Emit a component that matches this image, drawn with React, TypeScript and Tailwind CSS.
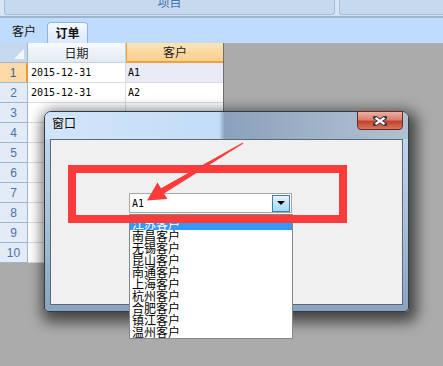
import React from "react";

const rows = [
  { n: "1", date: "2015-12-31", cust: "A1" },
  { n: "2", date: "2015-12-31", cust: "A2" },
  { n: "3" },
  { n: "4" },
  { n: "5" },
  { n: "6" },
  { n: "7" },
  { n: "8" },
  { n: "9" },
  { n: "10" },
];

const listItems = [
  "江苏客户",
  "南昌客户",
  "无锡客户",
  "昆山客户",
  "南通客户",
  "上海客户",
  "杭州客户",
  "合肥客户",
  "镇江客户",
  "温州客户",
];

const cjk = "font-['Noto_Sans_CJK_SC','Noto_Sans',sans-serif]";
const mono = "font-['DejaVu_Sans_Mono','Liberation_Mono',monospace]";

function CloseGlyph() {
  return (
    <svg width="14" height="10" viewBox="0 0 14 10">
      <path d="M2 1.5 L12 8.5 M12 1.5 L2 8.5" stroke="#3b3b3b" strokeWidth="4" strokeLinecap="square" />
      <path d="M2.5 1.8 L11.5 8.2 M11.5 1.8 L2.5 8.2" stroke="#ffffff" strokeWidth="2.2" />
    </svg>
  );
}

function Grid() {
  return (
    <div className="w-[224px] border-r border-[#6f6f6f] bg-white">
      <div className="grid grid-cols-[28px_98px_97px] h-[20px]">
        <div className="relative border-r border-b border-[#9eb6ce] bg-[#c6d8ee]">
          <div className="absolute right-[3px] bottom-[3px] w-0 h-0 border-l-[10px] border-l-transparent border-b-[10px] border-b-[#f4f8fc]" />
        </div>
        <div className="flex items-center justify-center border-r border-b border-[#c5d1de] bg-[linear-gradient(#f8fafd,#e3eaf4)] text-[#222]">
          日期
        </div>
        <div className="flex items-center justify-center border-l border-b-2 border-[#f0a040] bg-[linear-gradient(#fde4b8,#f7cf8c)] text-[#222]">
          客户
        </div>
      </div>
      {rows.map((r, i) => (
        <div key={r.n} className="grid grid-cols-[28px_98px_97px] h-[20px]">
          <div
            className={
              i === 0
                ? "flex items-center justify-center border-r-2 border-b border-r-[#f29536] border-b-[#9eb6ce] bg-[#fbdaa5] text-[#3a5f9a] font-['Liberation_Sans',sans-serif] text-[12px]"
                : "flex items-center justify-center border-r border-b border-[#9eb6ce] bg-[#e3ebf6] text-[#4a72aa] font-['Liberation_Sans',sans-serif] text-[12px]"
            }
          >
            {r.n}
          </div>
          <div className={`flex items-center pl-[3px] border-r border-b border-[#dcdcdc] bg-white text-black text-[10px] ${mono}`}>
            {r.date}
          </div>
          <div
            className={`flex items-center pl-[2px] border-b border-[#dcdcdc] text-black text-[10px] ${mono} ${
              i === 0 ? "bg-[#e9ecf6]" : "bg-white"
            }`}
          >
            {r.cust}
          </div>
        </div>
      ))}
    </div>
  );
}

export default function App() {
  return (
    <div className={`relative w-[443px] h-[366px] overflow-hidden bg-[#ababab] text-[12px] ${cjk}`}>
      {/* ribbon header */}
      <div className="flex h-[15px] gap-[4px] bg-[#d7e5f4] pl-[4px]">
        <div className="flex w-[331px] justify-center overflow-hidden rounded-b-[3px] border border-t-0 border-[#a5bdd9] bg-[#c5d9ef]">
          <span className="mt-[-6px] leading-[16px] text-[#4672ad]">项目</span>
        </div>
        <div className="flex-1 rounded-bl-[3px] border border-t-0 border-r-0 border-[#a5bdd9] bg-[#c5d9ef]" />
      </div>
      <div className="h-[3px] border-t border-[#d4e2f1] bg-[#9fb3ca]" />

      {/* sheet tabs */}
      <div className="flex h-[25px] items-end gap-[11px] bg-[#bfdbfd] pl-[12px]">
        <div className="mb-[4px] leading-[16px] text-[#111]">客户</div>
        <div className="flex h-[21px] w-[41px] items-center justify-center rounded-t-[4px] border border-b-0 border-[#8fb3dd] bg-[linear-gradient(#f5f9fe,#d9e8fa)] font-bold text-[#111]">
          订单
        </div>
      </div>

      <Grid />

      {/* window */}
      <div className="absolute left-[44px] top-[111px] h-[201px] w-[365px] rounded-t-[7px] rounded-b-[4px] border border-[#333c46] bg-[linear-gradient(#c7ddf3,#a9c0d8_55%,#8aa4bf)] px-[5px] shadow-[3px_5px_14px_5px_rgba(0,0,0,0.6)]">
        <div className="-mx-[5px] flex h-[27px] items-start justify-between rounded-t-[6px] bg-[linear-gradient(90deg,#d0e5f9_0%,#c3ddf7_48%,#89a1bb_49.5%,#9fb3c8_75%,#b2c1d1_100%)] pl-[7px] pr-[5px]">
          <span className="mt-[4px] leading-[14px] text-black [text-shadow:0_0_3px_#fff]">窗口</span>
          <div className="-mt-[1px] flex h-[19px] w-[46px] items-center justify-center rounded-b-[4px] border border-[#6e2a20] bg-[linear-gradient(#eab0a4,#d9806f_45%,#c2432c_55%,#d9745f)]">
            <CloseGlyph />
          </div>
        </div>
        <div className="h-[166px] border border-[#5b6a7a] bg-[#f0f0f0] pl-[78px] pt-[53px]">
          <div className="relative h-[20px] w-[163px]">
            <div className="flex h-[20px] w-[163px] items-center justify-between border border-[#a7a7a7] bg-white pl-[2px] pr-[1px]">
              <span className={`text-[10px] text-black ${mono}`}>A1</span>
              <div className="flex h-[17px] w-[18px] items-center justify-center border border-[#3c7fb1] bg-[linear-gradient(#eaf6fd,#bee6fd_50%,#a7d9f5)]">
                <div className="h-0 w-0 border-x-[4px] border-t-[4px] border-x-transparent border-t-black" />
              </div>
            </div>
            <div className="absolute left-0 top-[21px] h-[125px] w-[164px] border border-[#828790] bg-white pt-[3px]">
              {listItems.map((t, i) => (
                <div
                  key={t}
                  className={`h-[12px] overflow-hidden pl-[2px] text-[12px] leading-[12px] ${
                    i === 0 ? "bg-[#3399ff] text-white" : "text-black"
                  }`}
                >
                  {t}
                </div>
              ))}
            </div>
          </div>
        </div>
      </div>

      {/* annotation: red box */}
      <div className="absolute left-[68px] top-[165px] h-[58px] w-[279px] border-[8px] border-[#fe3b3b]" />

      {/* annotation: arrow */}
      <svg className="pointer-events-none absolute left-0 top-0" width="443" height="366" viewBox="0 0 443 366">
        <polygon
          points="243.3,143.4 164,193.4 167.5,199 147,200.5 157.5,182.5 161,188.2 242.7,142.6"
          fill="#fe3b3b"
        />
      </svg>
    </div>
  );
}
